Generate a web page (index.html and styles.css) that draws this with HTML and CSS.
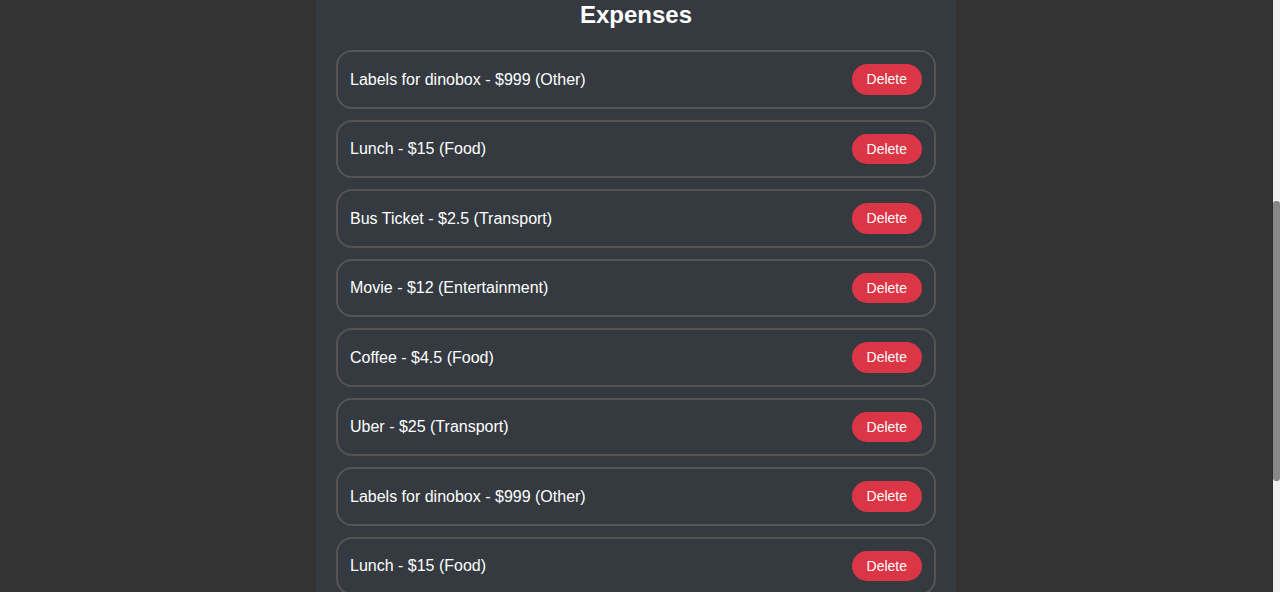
FILE: index.html
```html
<!DOCTYPE html>
<html lang="en">
<head>
<meta charset="utf-8">
<title>Expense Tracker</title>
<link rel="stylesheet" href="styles.css">
</head>
<body>
<div class="page">
  <main class="app">
    <h2 class="list-title">Expenses</h2>
    <ul class="expense-list">
      <li class="expense-item"><span class="expense-text">Labels for dinobox - $999 (Other)</span><button class="delete-btn" type="button">Delete</button></li>
      <li class="expense-item"><span class="expense-text">Lunch - $15 (Food)</span><button class="delete-btn" type="button">Delete</button></li>
      <li class="expense-item"><span class="expense-text">Bus Ticket - $2.5 (Transport)</span><button class="delete-btn" type="button">Delete</button></li>
      <li class="expense-item"><span class="expense-text">Movie - $12 (Entertainment)</span><button class="delete-btn" type="button">Delete</button></li>
      <li class="expense-item"><span class="expense-text">Coffee - $4.5 (Food)</span><button class="delete-btn" type="button">Delete</button></li>
      <li class="expense-item"><span class="expense-text">Uber - $25 (Transport)</span><button class="delete-btn" type="button">Delete</button></li>
      <li class="expense-item"><span class="expense-text">Labels for dinobox - $999 (Other)</span><button class="delete-btn" type="button">Delete</button></li>
      <li class="expense-item"><span class="expense-text">Lunch - $15 (Food)</span><button class="delete-btn" type="button">Delete</button></li>
    </ul>
  </main>
</div>
<div class="scrollbar" aria-hidden="true">
  <div class="scrollbar-thumb"></div>
</div>
</body>
</html>
```

FILE: styles.css
```css
html {
  height: 100%;
  overflow: hidden;
  background: #333333;
}

body {
  margin: 0;
  height: 100%;
  display: flex;
  background: #333333;
  font-family: "Liberation Sans", Arial, sans-serif;
  color: #ffffff;
  overflow: hidden;
}

.page {
  flex: 1;
  display: flex;
  justify-content: center;
  min-width: 0;
}

.app {
  width: 600px;
  padding: 1px 20px 0;
  background: #343a40;
}

.scrollbar {
  width: 8px;
  flex: none;
  padding-top: 201px;
  box-sizing: border-box;
  background: #f1f1f1;
  border-left: 1px solid #2b2e31;
}

.scrollbar-thumb {
  height: 280px;
  background: #888888;
  border-radius: 3px;
}

.list-title {
  margin: 0 0 21px;
  font-size: 24px;
  line-height: 28px;
  font-weight: bold;
  text-align: center;
}

.expense-list {
  list-style: none;
  margin: 0;
  padding: 0;
  display: flex;
  flex-direction: column;
  gap: 11px;
}

.expense-item {
  display: flex;
  align-items: center;
  justify-content: space-between;
  padding: 12px;
  border: 2px solid #555555;
  border-radius: 16px;
  font-size: 16px;
}

.expense-text {
  color: #ffffff;
  line-height: 18px;
  padding-top: 1px;
}

.delete-btn {
  padding: 7.25px 15px;
  border: none;
  border-radius: 16px;
  background: #dc3545;
  color: #ffffff;
  font: 14px/16px "Liberation Sans", Arial, sans-serif;
  cursor: pointer;
}
```
